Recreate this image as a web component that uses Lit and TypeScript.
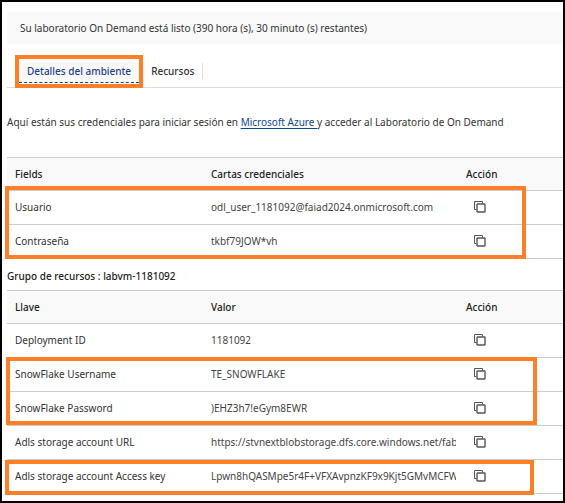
import { LitElement, html, css } from "lit";
import { customElement, property } from "lit/decorators.js";

interface Entry {
  label: string;
  value: string;
}

const credentials: Entry[] = [
  { label: "Usuario", value: "odl_user_1181092@faiad2024.onmicrosoft.com" },
  { label: "Contraseña", value: "tkbf79JOW*vh" },
];

const resources: Entry[] = [
  { label: "Deployment ID", value: "1181092" },
  { label: "SnowFlake Username", value: "TE_SNOWFLAKE" },
  { label: "SnowFlake Password", value: ")EHZ3h7!eGym8EWR" },
  { label: "Adls storage account URL", value: "https://stvnextblobstorage.dfs.core.windows.net/fabr" },
  { label: "Adls storage account Access key", value: "Lpwn8hQASMpe5r4F+VFXAvpnzKF9x9Kjt5GMvMCFW" },
];

@customElement("details-table")
export class DetailsTable extends LitElement {
  @property({ attribute: false }) headings: string[] = [];
  @property({ attribute: false }) entries: Entry[] = [];

  static styles = css`
    :host {
      display: block;
    }
    .table {
      width: 100%;
      table-layout: fixed;
      border-collapse: separate;
      border-spacing: 0;
      border-top: 1px solid #ccc;
    }
    .label-col {
      width: 196px;
    }
    .value-col {
      width: 255px;
    }
    .cell {
      box-sizing: border-box;
      height: 34px;
      padding: 0 8px 2px;
      border-bottom: 1px solid #ccc;
      text-align: left;
      font-weight: 400;
      white-space: nowrap;
      overflow: hidden;
      vertical-align: middle;
    }
    .label {
      color: #333;
    }
    .value {
      padding-right: 2px;
      color: #444;
    }
    .text {
      display: block;
      overflow: hidden;
    }
    .head {
      height: 33px;
      padding-bottom: 0;
      background: #f9f9f9;
      color: #222;
      font-weight: 500;
    }
    .copy {
      display: block;
      margin: 0;
      padding: 0 8px;
      border: 0;
      background: none;
      color: #555;
      cursor: pointer;
    }
    .icon {
      display: block;
      width: 12px;
      height: 12px;
    }
  `;

  render() {
    return html`
      <table class="table">
        <colgroup>
          <col class="label-col" />
          <col class="value-col" />
          <col />
        </colgroup>
        <thead>
          <tr>
            ${this.headings.map((h) => html`<th class="cell head" scope="col">${h}</th>`)}
          </tr>
        </thead>
        <tbody>
          ${this.entries.map(
            (e) => html`<tr>
              <th class="cell label" scope="row">${e.label}</th>
              <td class="cell value"><span class="text">${e.value}</span></td>
              <td class="cell">
                <button class="copy" type="button" aria-label="Copiar ${e.label}">
                  <svg class="icon" viewBox="0 0 12 12" fill="none" stroke="currentColor" aria-hidden="true">
                    <path d="M2.5 8.5H.5V.5H8.5V2.5" />
                    <rect x="3" y="3" width="8" height="8" rx="0.6" stroke-width="1.4" />
                  </svg>
                </button>
              </td>
            </tr>`
          )}
        </tbody>
      </table>
    `;
  }
}

@customElement("app-root")
export class AppRoot extends LitElement {
  static styles = css`
    :host {
      display: block;
      box-sizing: border-box;
      min-height: 100vh;
      padding: 10px 0 6px 5px;
      border: 2px solid #000;
      overflow: hidden;
      background: #fff;
      color: #333;
      font: 10px/16px "Noto Sans", "Open Sans", sans-serif;
    }
    .banner {
      padding: 8px 13px;
      background: #f9f9f9;
    }
    .tabs {
      display: flex;
      align-items: center;
      margin-top: 11px;
      padding-left: 8px;
      border-bottom: 1px solid #ddd;
    }
    .tab {
      margin: 0;
      padding: 0 8px;
      border: 0;
      background: none;
      color: #333;
      font: inherit;
      font-weight: 500;
      line-height: 16px;
      cursor: pointer;
    }
    .tab.idle {
      border-right: 1px solid #ddd;
    }
    .tab.active {
      display: block;
      height: 24px;
      background: #f9f9f9;
      border-bottom: 1px dashed #0b4a9f;
      color: #1f3f8f;
    }
    .marked {
      padding-bottom: 1px;
      border: 4px solid #ff7f27;
      margin-bottom: -1px;
    }
    .intro {
      margin: 26px 0 27px;
    }
    .link {
      color: #0b4a8f;
      text-underline-offset: 2px;
    }
    .group {
      margin: 9px 0 6px;
      color: #222;
      font: inherit;
      font-weight: 500;
    }
    .section {
      position: relative;
    }
    .highlight {
      position: absolute;
      box-sizing: border-box;
      border: 4px solid #ff7f27;
      pointer-events: none;
    }
    .login {
      top: 29px;
      left: -2px;
      width: 521px;
      height: 73px;
    }
    .snowflake {
      top: 67px;
      left: -1px;
      width: 531px;
      height: 68px;
    }
    .access-key {
      top: 170px;
      left: -2px;
      width: 529px;
      height: 35px;
    }
  `;

  render() {
    return html`
      <div class="banner" role="status">Su laboratorio On Demand está listo (390 hora (s), 30 minuto (s) restantes)</div>
      <div class="tabs" role="tablist">
        <div class="marked" role="presentation">
          <button class="tab active" type="button" role="tab" aria-selected="true">Detalles del ambiente</button>
        </div>
        <button class="tab idle" type="button" role="tab" aria-selected="false">Recursos</button>
      </div>
      <p class="intro">
        Aquí están sus credenciales para iniciar sesión en
        <a class="link" href="#azure">Microsoft Azure&nbsp;</a>y acceder al Laboratorio de On Demand
      </p>
      <div class="section">
        <details-table .headings=${["Fields", "Cartas credenciales", "Acción"]} .entries=${credentials}></details-table>
        <div class="highlight login"></div>
      </div>
      <h2 class="group">Grupo de recursos : labvm-1181092</h2>
      <div class="section">
        <details-table .headings=${["Llave", "Valor", "Acción"]} .entries=${resources}></details-table>
        <div class="highlight snowflake"></div>
        <div class="highlight access-key"></div>
      </div>
    `;
  }
}
